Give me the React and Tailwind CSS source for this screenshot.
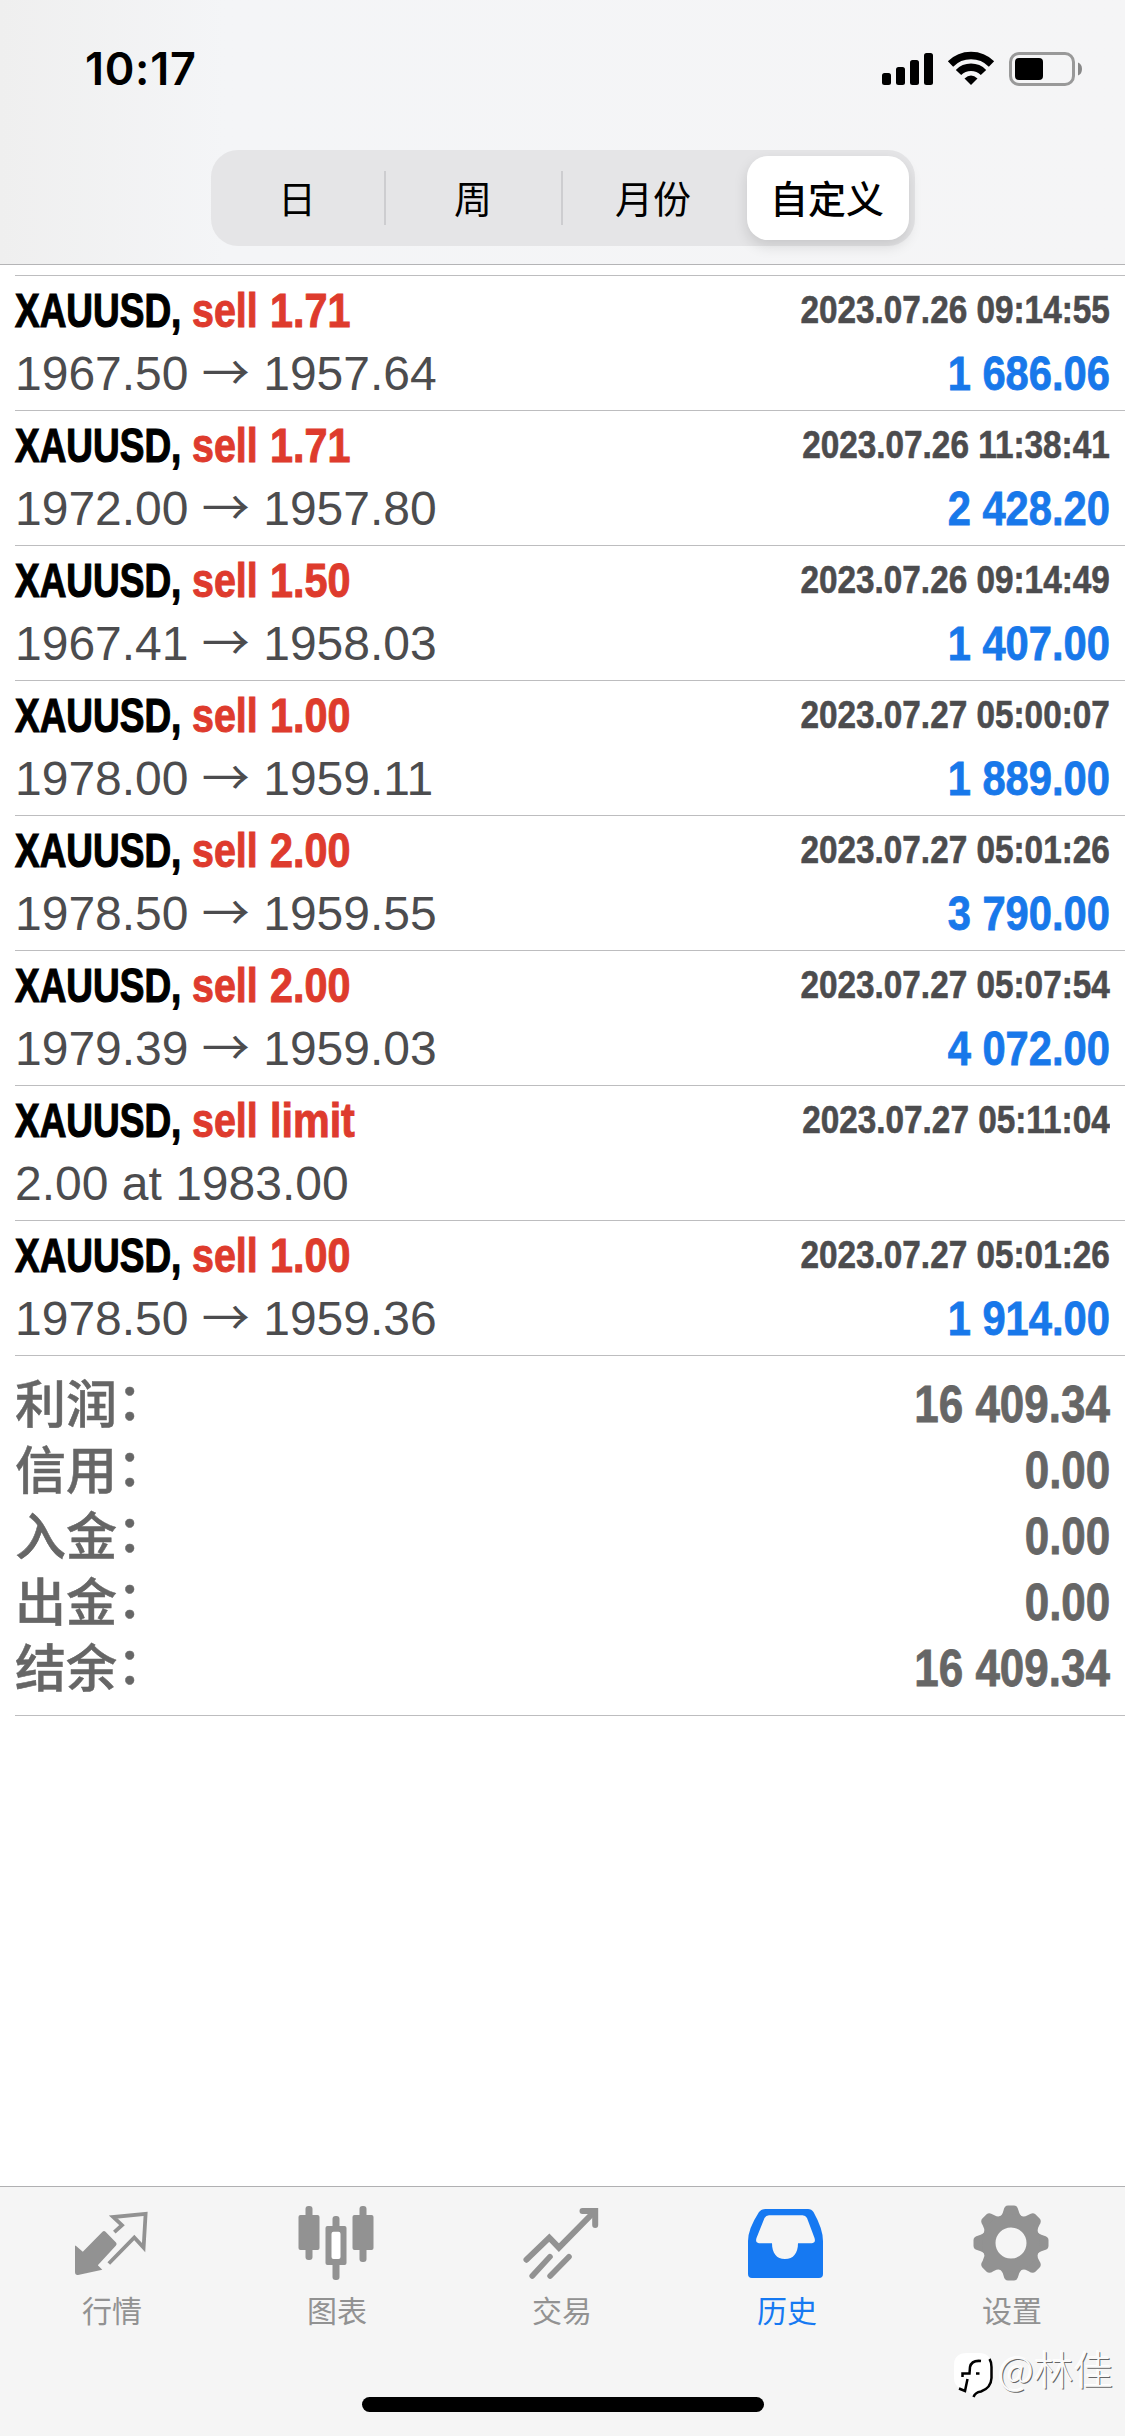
import { useState } from 'react';
import clsx from 'clsx';

const PERIODS = [
  { id: 'day', label: '日', width: 'w-[175px]' },
  { id: 'week', label: '周', width: 'w-[177px]' },
  { id: 'month', label: '月份', width: 'w-[181px]' },
  { id: 'custom', label: '自定义', width: 'w-[171px]' },
];

const DEALS = [
  { type: 'sell', volume: '1.71', open: '1967.50', close: '1957.64', time: '2023.07.26 09:14:55', profit: '1 686.06' },
  { type: 'sell', volume: '1.71', open: '1972.00', close: '1957.80', time: '2023.07.26 11:38:41', profit: '2 428.20' },
  { type: 'sell', volume: '1.50', open: '1967.41', close: '1958.03', time: '2023.07.26 09:14:49', profit: '1 407.00' },
  { type: 'sell', volume: '1.00', open: '1978.00', close: '1959.11', time: '2023.07.27 05:00:07', profit: '1 889.00' },
  { type: 'sell', volume: '2.00', open: '1978.50', close: '1959.55', time: '2023.07.27 05:01:26', profit: '3 790.00' },
  { type: 'sell', volume: '2.00', open: '1979.39', close: '1959.03', time: '2023.07.27 05:07:54', profit: '4 072.00' },
  { type: 'sell', volume: 'limit', note: '2.00 at 1983.00', time: '2023.07.27 05:11:04' },
  { type: 'sell', volume: '1.00', open: '1978.50', close: '1959.36', time: '2023.07.27 05:01:26', profit: '1 914.00' },
];

const TOTALS = [
  { label: '利润', value: '16 409.34' },
  { label: '信用', value: '0.00' },
  { label: '入金', value: '0.00' },
  { label: '出金', value: '0.00' },
  { label: '结余', value: '16 409.34' },
];

function QuotesIcon() {
  return (
    <svg width="80" height="80" viewBox="0 0 80 80" fill="none">
      <path d="M3.5 41.5 10.8 47.8 30.5 27.8Q32 26.3 33.5 27.8L44 38.5Q45.3 40 44 41.5L25.8 61.3 30.3 65.7 6 71Q3 71.3 3 68V42Z" fill="#929292" />
      <path d="M42.3 28.2 50 21.2 41.2 13 73.6 9.8 71.6 43.6 62.3 33.5 36.8 59.5" stroke="#929292" strokeWidth="3.8" />
    </svg>
  );
}

function ChartIcon() {
  return (
    <svg width="80" height="80" viewBox="0 0 80 80" fill="#929292">
      <rect x="8.5" y="2" width="7" height="54" rx="3" />
      <rect x="1.5" y="11" width="21" height="35" rx="2" />
      <rect x="35.5" y="12" width="7" height="64" rx="3" />
      <rect x="28.5" y="22" width="21" height="39" rx="2" />
      <rect x="34.5" y="27.7" width="9" height="27.3" rx="2" fill="#fff" />
      <rect x="62.5" y="2" width="7" height="56" rx="3" />
      <rect x="55.5" y="11" width="21" height="35" rx="2" />
    </svg>
  );
}

function TradeIcon() {
  return (
    <svg width="80" height="80" viewBox="0 0 80 80" fill="none" stroke="#929292" strokeWidth="6" strokeLinecap="round">
      <path d="M4.5 55.7 27.3 33.7 36.9 43.7 72 8" />
      <path d="M60.5 6.9H73.2V21" />
      <path d="M28 52.7 10.2 72M47 52.7 28.1 72" strokeWidth="5.6" />
    </svg>
  );
}

function HistoryIcon() {
  return (
    <svg width="80" height="80" viewBox="0 0 80 80" fill="#1679f2" fillRule="evenodd">
      <path d="M18.5 5H61Q64.5 5 66.500 8 76 25 76 37V70Q76 74 72 74H5Q1 74 1 70V37Q1 25 12 8 14.500 5 18.500 5ZM22 11.300Q19 11.300 17.500 14L9.500 34Q8 39 12 39.200H25C25 49 29.500 55 38 55S51 49 51 39.200H65Q69 39 67.500 34L60 14Q58.500 11.300 55.500 11.300Z" />
    </svg>
  );
}

function SettingsIcon() {
  return (
    <svg width="80" height="80" viewBox="0 0 80 80" fill="#929292">
      {[0, 45, 90, 135, 180, 225, 270, 315].map(a => (
        <path key={a} transform={`rotate(${a} 39 39)`} d="M26.500 14Q30.500 11 31.500 6.500 32.500 1.500 36 1.500H42Q45.500 1.500 46.500 6.500 47.500 11 51.500 14V20H26.500Z" />
      ))}
      <circle cx="39" cy="39" r="22.250" fill="none" stroke="#929292" strokeWidth="13.500" />
    </svg>
  );
}

const TABS = [
  { id: 'quotes', label: '行情', icon: QuotesIcon },
  { id: 'chart', label: '图表', icon: ChartIcon },
  { id: 'trade', label: '交易', icon: TradeIcon },
  { id: 'history', label: '历史', icon: HistoryIcon },
  { id: 'settings', label: '设置', icon: SettingsIcon },
];

function StatusBar() {
  return (
    <div className="h-[150px] pt-[42px] pl-[85px] pr-[42px] flex items-start justify-between">
      <span className="font-[Inter,sans-serif] font-semibold text-[45px] leading-[54px] tracking-[0.7px]">10:17</span>
      <svg className="mt-[6px]" width="204" height="42" viewBox="0 0 204 42">
        <rect x="3" y="25" width="9" height="12" rx="2.500" />
        <rect x="17" y="19" width="9" height="18" rx="2.500" />
        <rect x="31" y="12" width="9" height="25" rx="2.500" />
        <rect x="45" y="5" width="9" height="32" rx="2.500" />
        <g fill="none" stroke="#000" strokeWidth="7.500">
          <path d="M71.500 16A29 29 0 0 1 112.500 16" />
          <path d="M79.500 24.500A17.500 17.500 0 0 1 104.500 24.500" />
        </g>
        <path d="M92 37 85.500 30.500Q92 24.500 98.500 30.500Z" />
        <rect x="131.500" y="5.500" width="63" height="31" rx="8.500" fill="none" stroke="#999" strokeWidth="3" />
        <rect x="136" y="10" width="28" height="22" rx="4" />
        <path d="M199 14.500Q203 16 203 21T199 27.500Z" fill="#888" />
      </svg>
    </div>
  );
}

function DealRow({ deal }) {
  return (
    <div className="h-[135px] pt-[3px] pr-[15px] border-b border-[#bdbdbf]">
      <div className="h-[63px] flex items-center justify-between font-bold">
        <div className="flex text-[48px] leading-[63px] whitespace-pre">
          <span className="w-[177px] origin-left scale-x-[0.77] [-webkit-text-stroke:1.2px_#000]">XAUUSD,</span>
          <span className="w-[78px] origin-left scale-x-[0.82] text-[#de3b2d] [-webkit-text-stroke:1px_#de3b2d]">{deal.type}</span>
          <span className="origin-left scale-x-[0.86] text-[#de3b2d] [-webkit-text-stroke:1px_#de3b2d]">{deal.volume}</span>
        </div>
        <span className="origin-right scale-x-[0.877] text-[38px] leading-[63px] text-[#4c4c4e] [-webkit-text-stroke:0.6px_#4c4c4e]">{deal.time}</span>
      </div>
      <div className="h-[63px] flex items-center justify-between text-[48px] leading-[63px]">
        <span className="text-[#4c4c4e] whitespace-pre">
          {deal.note || (
            <>
              {deal.open} <span className="font-['Noto_Sans_CJK_SC',sans-serif] leading-none">→</span> {deal.close}
            </>
          )}
        </span>
        {deal.profit && (
          <span className="origin-right scale-x-[0.868] font-bold text-[#1878ea] [-webkit-text-stroke:0.8px_#1878ea]">{deal.profit}</span>
        )}
      </div>
    </div>
  );
}

export default function App() {
  const [period, setPeriod] = useState('custom');
  const [tab, setTab] = useState('history');

  return (
    <div className="w-[1125px] h-[2436px] flex flex-col bg-white text-black overflow-hidden relative font-['Liberation_Sans','Noto_Sans_CJK_SC',sans-serif]">
      {/* Header */}
      <header className="h-[265px] shrink-0 border-b border-[#b4b4b6] bg-linear-to-r from-[#efefef] via-[#f4f5f7] via-20% to-[#f5f5f6]">
        <StatusBar />
        <div className="w-[704px] h-24 ml-[211px] rounded-[27px] bg-[#e5e5e7] flex items-center font-['Noto_Sans_CJK_SC',sans-serif] text-[38px]">
          {PERIODS.map((p, i) => (
            <button
              key={p.id}
              onClick={() => setPeriod(p.id)}
              className={clsx('h-full shrink-0 flex items-center', p.width)}
            >
              <span
                className={clsx(
                  'h-[84px] flex-1 flex items-center justify-center pb-[4px]',
                  period === p.id
                    ? 'mr-[6px] ml-[3px] pr-[2px] rounded-[21px] bg-white font-medium shadow-[0_6px_14px_rgba(0,0,0,0.13)]'
                    : 'pr-px'
                )}
              >
                {p.label}
              </span>
              {i < 2 && <span className="w-[2px] h-[54px] bg-[#cdcdd0]" />}
            </button>
          ))}
        </div>
      </header>

      {/* Deals */}
      <main className="flex-1 pl-[15px] pt-[10px]">
        <div className="border-t border-[#bdbdbf]">
          {DEALS.map((deal, i) => <DealRow key={i} deal={deal} />)}
        </div>

        {/* Totals */}
        <div className="h-[360px] pt-[16px] pr-[15px] border-b border-[#bdbdbf] text-[#666]">
          {TOTALS.map(t => (
            <div key={t.label} className="h-[66px] flex items-center justify-between text-[51px] leading-[66px]">
              <span className="font-medium [-webkit-text-stroke:0.5px_#666] flex translate-y-px">
                {t.label}
                <span className="-translate-y-[3px]">：</span>
              </span>
              <span className="origin-right scale-x-[0.862] font-bold [-webkit-text-stroke:0.8px_#666]">{t.value}</span>
            </div>
          ))}
        </div>
      </main>

      {/* Tab bar */}
      <nav className="h-[250px] shrink-0 border-t border-[#b0b0b2] bg-[#f5f5f5] flex flex-col items-center">
        <div className="w-full h-[210px] flex">
          {TABS.map(({ id, label, icon: Icon }) => (
            <button
              key={id}
              onClick={() => setTab(id)}
              className={clsx(
                'w-[225px] pt-[17px] pr-px flex flex-col items-center justify-start font-["Noto_Sans_CJK_SC",sans-serif] text-[30px] leading-[40px]',
                tab === id ? 'text-[#1679f2]' : 'text-[#929292]'
              )}
            >
              <Icon />
              <span className="mt-[5px]">{label}</span>
            </button>
          ))}
        </div>
        <div className="w-[402px] h-[15px] rounded-full bg-black" />
      </nav>

      {/* Watermark */}
      <div className="absolute left-[953px] top-[2342px] flex items-center gap-[5px]">
        <svg width="40" height="58" viewBox="0 0 40 58">
          <path d="M14 11H26Q38 11 38 23V38Q38 48 27 51L21 55 14 48 5 45Q1 42 1 36V23Q1 11 14 11Z" fill="#fff" />
          <path d="M36.500 17Q38.500 20 38.500 25V36Q38 46 28 49.500 22 50.500 20.500 55" fill="none" stroke="#000" strokeWidth="2.500" />
          <path d="M28 19Q18.500 18 17 25L16.500 31.500H9.500V35M14.500 37 12 49 6 46.500M23 31.500H26.500" fill="none" stroke="#000" strokeWidth="2.500" />
        </svg>
        <span className="font-['Noto_Sans_CJK_SC',sans-serif] font-light text-[39.500px] leading-[52px] pb-[6px] text-[#fafafa] [text-shadow:1px_1px_0_#666,-1px_-1px_0_#fff]">@林佳</span>
      </div>
    </div>
  );
}
